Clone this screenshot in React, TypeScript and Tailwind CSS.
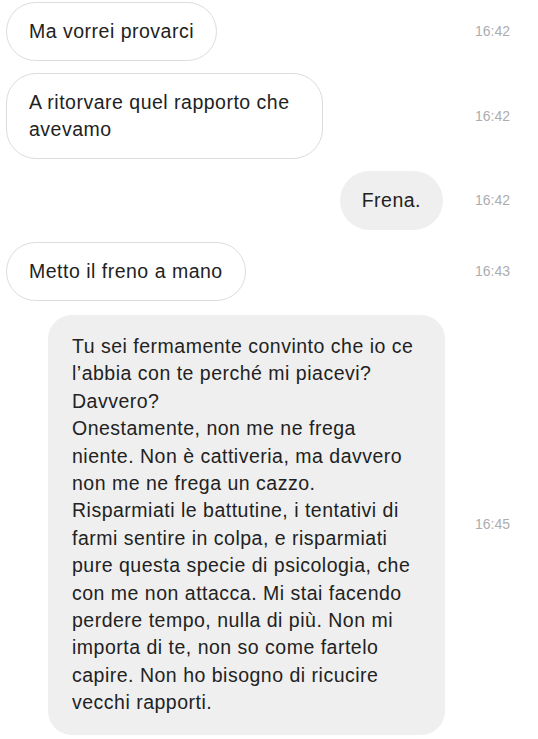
type Message = {
  lines: string[];
  time: string;
  mine?: boolean;
  wide?: boolean;
  width?: string;
};

export default function App() {
  const messages: Message[] = [
    { lines: ['Ma vorrei provarci'], time: '16:42' },
    { lines: ['A ritorvare quel rapporto che', 'avevamo'], time: '16:42', width: 'w-[317px]' },
    { lines: ['Frena.'], time: '16:42', mine: true },
    { lines: ['Metto il freno a mano'], time: '16:43' },
    {
      lines: [
        'Tu sei fermamente convinto che io ce',
        'l’abbia con te perché mi piacevi?',
        'Davvero?',
        'Onestamente, non me ne frega',
        'niente. Non è cattiveria, ma davvero',
        'non me ne frega un cazzo.',
        'Risparmiati le battutine, i tentativi di',
        'farmi sentire in colpa, e risparmiati',
        'pure questa specie di psicologia, che',
        'con me non attacca. Mi stai facendo',
        'perdere tempo, nulla di più. Non mi',
        'importa di te, non so come fartelo',
        'capire. Non ho bisogno di ricucire',
        'vecchi rapporti.'
      ],
      time: '16:45',
      mine: true,
      wide: true
    }
  ];

  return (
    <div className="min-h-screen bg-white pt-[2px] font-['Liberation_Sans',Arial,sans-serif] text-[#222222]">
      <div className="flex flex-col gap-3">
        {messages.map((m, i) => (
          <div key={i} className={`flex items-center ${m.wide ? 'mt-[2px]' : ''}`}>
            <div className={`flex w-[445px] ${m.mine ? 'justify-end' : 'justify-start pl-[6px]'}`}>
              {m.wide ? (
                // long message, lines broken as in the app
                <div className="w-[397px] rounded-[24px] bg-[#efefef] py-[18px] pl-[24px] pr-[20px] text-[19.5px] leading-[27.4px] tracking-[0.5px]">
                  {m.lines.map((l, j) => (
                    <div key={j} className="whitespace-nowrap">{l}</div>
                  ))}
                </div>
              ) : m.mine ? (
                <div className="mr-[2px] rounded-full bg-[#efefef] px-[22px] py-4 text-[19.5px] leading-[27px] tracking-[0.5px]">
                  {m.lines.map((l, j) => (
                    <div key={j} className="whitespace-nowrap">{l}</div>
                  ))}
                </div>
              ) : (
                <div className={`${m.width ?? ''} rounded-[30px] border border-[#dcdcdc] bg-white px-[22px] py-[15px] text-[19.5px] leading-[27px] tracking-[0.5px]`}>
                  {m.lines.map((l, j) => (
                    <div key={j} className="whitespace-nowrap">{l}</div>
                  ))}
                </div>
              )}
            </div>
            <div className="flex-1 pr-[28px] text-right text-[14px] text-[#adadad]">{m.time}</div>
          </div>
        ))}
      </div>
    </div>
  );
}
